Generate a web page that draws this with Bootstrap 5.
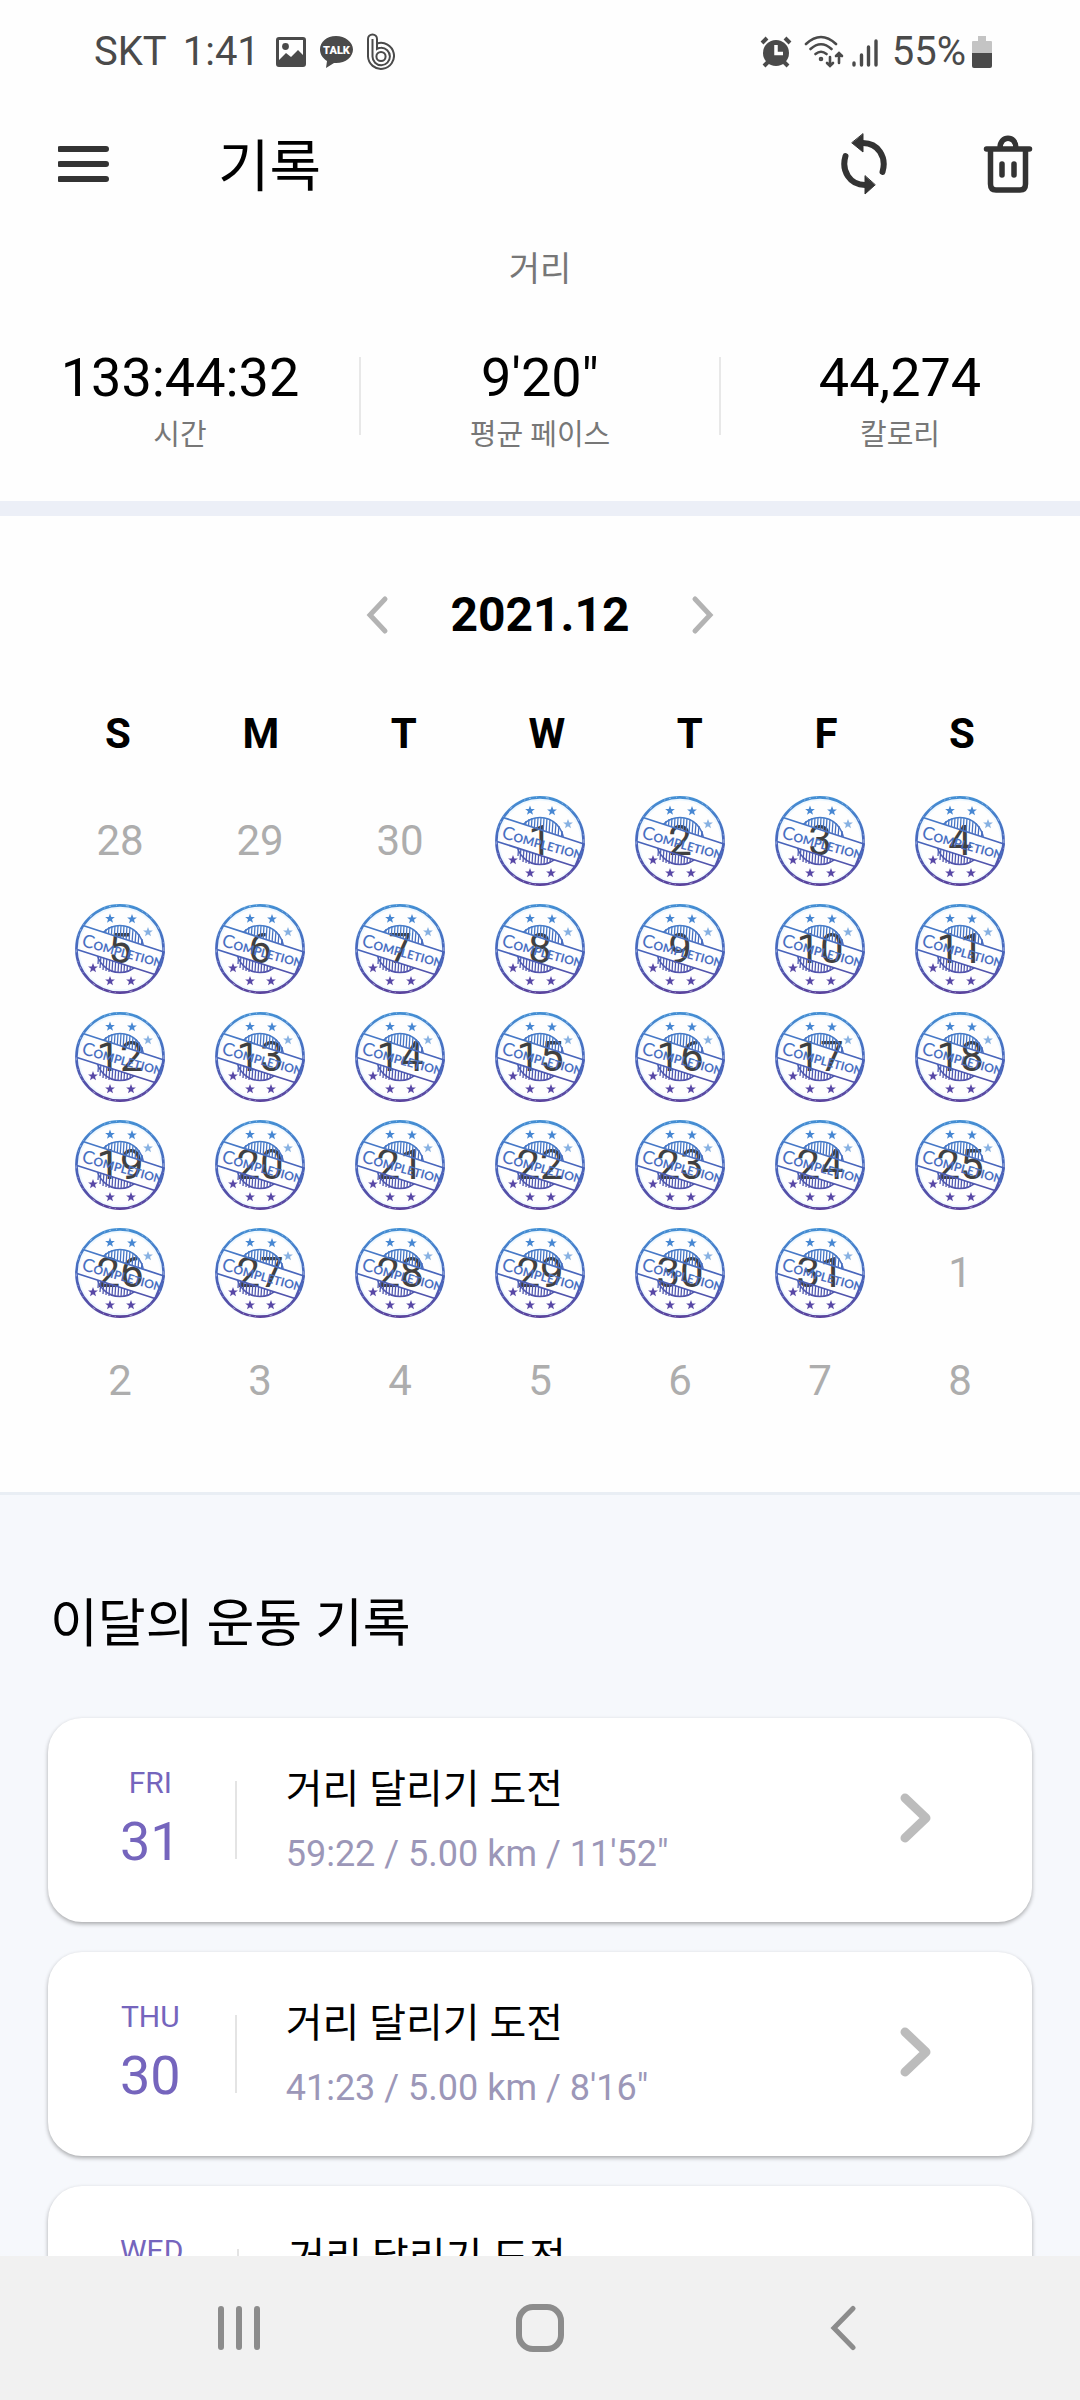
<!DOCTYPE html>
<html lang="ko">
<head>
<meta charset="utf-8">
<meta name="viewport" content="width=device-width, initial-scale=1">
<title>기록</title>
<link href="https://cdn.jsdelivr.net/npm/bootstrap@5.3.0/dist/css/bootstrap.min.css" rel="stylesheet">
<style>
  body { font-family: Roboto, "Noto Sans CJK KR", sans-serif; color: #000; background: #fefefe; line-height: 1; }
  svg { display: block; flex: none; }
  .btn { --bs-btn-padding-x: 0; --bs-btn-padding-y: 0; --bs-btn-border-width: 0; }

  .status-bar { height: 104px; padding: 0 88px 0 94px; font-size: 40px; color: #4a4a4a; }
  .app-bar { height: 120px; padding: 0 45px 0 58px; }
  .app-title { font-size: 56px; line-height: 72px; margin-left: 106px; padding-top: 6px; }

  .caption-lg { font-size: 34px; line-height: 48px; color: #777; margin-top: 21px; }
  .stats { padding: 53px 0 44px; border-bottom: 15px solid #eceff7; }
  .stat + .stat::before { content: ""; position: absolute; left: -1px; top: 11px; width: 2px; height: 78px; background: #e8e8e8; }
  .stat-value { font-size: 54px; line-height: 64px; }
  .stat-label { font-size: 29px; line-height: 44px; color: #777; padding-top: 3px; }

  .calendar { padding: 69px 50px 57px; border-bottom: 3px solid #e9eef4; }
  .month { gap: 61px; line-height: 60px; }
  .month-name { font-size: 48px; font-weight: 700; }
  .weekdays { font-size: 42px; line-height: 60px; padding: 0 54px; margin: 58px 0 22px; }
  .weekdays th { font-weight: 700; }
  .week td { flex: 1 0 0; height: 108px; font-size: 42px; color: #404040; }
  .week .out { color: #adadad; }
  .stamp { position: absolute; width: 90px; height: 90px; }

  .records { background: #f6f8fc; padding: 94px 48px 0; }
  .records h2 { font-size: 52px; font-weight: 400; line-height: 72px; margin: 0 0 57px 2px; }
  .record-list { gap: 30px; }
  .record { height: 204px; padding: 0 100px 0 72px; border-radius: 34px; background: #fff; color: #000;
            box-shadow: 0 2px 4px rgba(0, 0, 0, .32); }
  .record-day { color: #7565bd; }
  .record-dow { font-size: 30px; line-height: 44px; }
  .record-date { font-size: 54px; line-height: 74px; }
  .record-rule { width: 2px; height: 78px; background: #e4e4e4; margin: 0 49px 0 54px; }
  .record-title { font-size: 40px; line-height: 64px; }
  .record-data { font-size: 36px; line-height: 64px; color: #9c97b8; }

  .scroll-area { min-height: 0; scrollbar-width: none; }
  .scroll-area::-webkit-scrollbar { display: none; }
  .system-nav { height: 144px; padding: 0 88px; background: #f1f1f1; }
</style>
</head>
<body>
<svg width="0" height="0" class="position-absolute" aria-hidden="true">
  <defs>
    <linearGradient id="ink" gradientUnits="userSpaceOnUse" x1="0" y1="0" x2="0" y2="90">
      <stop offset="0" stop-color="#4490d4"/><stop offset=".5" stop-color="#4866bc"/><stop offset="1" stop-color="#5b429c"/>
    </linearGradient>
    <clipPath id="offBanner"><path d="M0 0H90V48L8 21L0 19ZM0 45L80 70V90H0Z"/></clipPath>
    <path id="star" d="M0-5L1.3-1.6L4.9-1.5L2 .8L3 4.2L0 2.2L-3 4.2L-2 .8L-4.9-1.5L-1.3-1.6Z"/>
    <symbol id="stamp" viewBox="0 0 90 90">
      <circle cx="45" cy="45" r="43" fill="none" stroke="#e3f4ff" stroke-width="5" opacity=".6"/>
      <g fill="none" stroke="url(#ink)">
        <circle cx="45" cy="45" r="43.6" stroke-width="2.6"/>
        <circle cx="45" cy="45" r="43.8" stroke="#fff" stroke-width="1" stroke-dasharray="2 5 1 9 3 14 1 4" opacity=".45"/>
        <path d="M8 21.5L89 48L80 70.5L2 45.5" stroke-width="1.8"/>
        <g clip-path="url(#offBanner)">
          <circle cx="45" cy="45" r="23.5" stroke-width="1.5"/>
          <path stroke-width="1.3" d="M25 31L23 60M28 27L25 64M31 25L28 66M34 23L31 67M37 22L34 68M40 22L37 68M43 22L40 68M46 22L43 69M49 22L46 69M52 22L49 68M55 23L52 68M58 25L55 67M61 27L58 65M64 30L61 62M67 35L65 58"/>
        </g>
      </g>
      <g fill="url(#ink)" transform="rotate(15 6 42)">
        <text x="6" y="42" font-family="Lato, sans-serif" font-size="18">C<tspan font-size="12" font-weight="700">OMPLETION</tspan></text>
      </g>
      <g fill="#4787d2">
        <use href="#star" x="35" y="14.500"/><use href="#star" x="57" y="15"/><use href="#star" x="73" y="28" opacity=".65"/>
      </g>
      <g fill="#5848a6">
        <use href="#star" x="18" y="64"/><use href="#star" x="35" y="77"/><use href="#star" x="56" y="77"/>
      </g>
    </symbol>
  </defs>
</svg>

<div class="vh-100 d-flex flex-column">
  <div class="status-bar flex-shrink-0 d-flex align-items-center justify-content-between">
    <div class="d-flex align-items-center">
      <span>SKT</span><span class="ms-3">1:41</span>
      <svg class="ms-3" width="30" height="30" viewBox="0 0 30 30" role="img" aria-label="사진">
        <path fill="#4a4a4a" fill-rule="evenodd" d="M3 0H27Q30 0 30 3V27Q30 30 27 30H3Q0 30 0 27V3Q0 0 3 0ZM3 3V23L10 16L15 20L22 13L27 18V3Z"/><circle cx="9.500" cy="9.500" r="3.400" fill="#4a4a4a"/>
      </svg>
      <svg style="margin-left:13px" width="34" height="34" viewBox="0 0 34 34" role="img" aria-label="톡">
        <path fill="#4a4a4a" d="M17 1C7.600 1 1 7 1 14.500C1 19.500 4 23.500 8 26L7 33L15 28C26 29 34 22 34 14.500C34 7 26 1 17 1Z"/>
        <text x="17.500" y="19" text-anchor="middle" font-family="Roboto" font-size="11" font-weight="900" fill="#fff">TALK</text>
      </svg>
      <svg style="margin-left:14px" width="28" height="38" viewBox="0 0 28 38" role="img" aria-label="b" fill="none" stroke="#4a4a4a" stroke-width="2">
        <path d="M1 6A4.500 4.500 0 0 1 10 6V10.500A13 13 0 1 1 1 23.500Z"/>
        <path d="M5.500 6V23.500A8.700 8.700 0 1 0 14 14.800Q12 14.800 10 16V11"/>
        <circle cx="14" cy="23.500" r="4.600"/>
      </svg>
    </div>
    <div class="d-flex align-items-center">
      <svg width="32" height="32" viewBox="0 0 32 32" role="img" aria-label="알람">
        <circle cx="16" cy="17" r="13" fill="#4a4a4a"/>
        <path d="M2 7L7 2M25 2L30 7M8 26L4 30M24 26L28 30" stroke="#4a4a4a" stroke-width="4" fill="none"/>
        <path d="M16 9V17.500H23" stroke="#fff" stroke-width="3.500" fill="none"/>
      </svg>
      <svg style="margin-left:12px" width="40" height="34" viewBox="0 0 40 34" role="img" aria-label="와이파이" fill="none" stroke="#4a4a4a" stroke-width="2.600" stroke-linecap="round">
        <path d="M2 9Q17-5 32 9M6.500 14Q17 4.500 27.500 14M11.500 19Q17 14.500 22.500 19"/>
        <circle cx="17" cy="24" r="1" /><path d="M26 22V30M23 28L26 31L29 28M35 28V19M32 21L35 18L38 21"/>
      </svg>
      <svg class="ms-2" width="26" height="32" viewBox="0 0 26 32" role="img" aria-label="신호" fill="none" stroke="#4a4a4a" stroke-width="3.400" stroke-linecap="round">
        <path d="M2 27V29M9.500 19V29M16.500 11V29M24 5V29"/>
      </svg>
      <span style="margin-left:14px">55%</span>
      <svg style="margin-left:6px" width="20" height="32" viewBox="0 0 20 32" role="img" aria-label="배터리">
        <path fill="#c4c4c4" d="M6 0H14V5H19Q20 5 20 6V17H0V6Q0 5 1 5H6Z"/><path fill="#4a4a4a" d="M0 17H20V30Q20 32 18 32H2Q0 32 0 30Z"/>
      </svg>
    </div>
  </div>

  <header class="app-bar flex-shrink-0 d-flex align-items-center">
    <button type="button" class="btn" aria-label="메뉴">
      <svg width="54" height="40" viewBox="0 0 54 40" stroke="#333" stroke-width="6" stroke-linecap="round"><path d="M2 5H48M2 20H48M2 35H48"/></svg>
    </button>
    <h1 class="app-title fw-normal mb-0">기록</h1>
    <button type="button" class="btn ms-auto" aria-label="동기화">
      <svg width="50" height="64" viewBox="0 0 50 64" fill="none" stroke="#333" stroke-width="6" stroke-linecap="round">
        <path d="M24 11C39 11 48 25 43.500 40M26 53C11 53 2 39 6.500 24"/>
        <path d="M24 2V20L13 11ZM26 44V62L36 53Z" fill="#333" stroke-width="1" stroke-linejoin="round"/>
      </svg>
    </button>
    <button type="button" class="btn" style="margin-left:92px" aria-label="삭제">
      <svg width="54" height="60" viewBox="0 0 54 60" fill="none" stroke="#333" stroke-width="5.500" stroke-linecap="round">
        <path d="M5.500 15H48.500M9.500 15V50Q9.500 56 15 56H39Q44.500 56 44.500 50V15M19 14C19 1 35 1 35 14M21 30V41M33 30V41"/>
      </svg>
    </button>
  </header>

  <main class="scroll-area flex-grow-1 overflow-auto">
    <p class="caption-lg text-center mb-0">거리</p>
    <section class="stats row g-0 text-center">
      <div class="stat col position-relative"><div class="stat-value">133:44:32</div><div class="stat-label">시간</div></div>
      <div class="stat col position-relative"><div class="stat-value">9'20"</div><div class="stat-label">평균 페이스</div></div>
      <div class="stat col position-relative"><div class="stat-value">44,274</div><div class="stat-label">칼로리</div></div>
    </section>

    <section class="calendar">
      <div class="month d-flex align-items-center justify-content-center">
        <button type="button" class="btn" aria-label="이전 달"><svg width="24" height="40" viewBox="0 0 24 40" fill="none" stroke="#b3b3b3" stroke-width="5" stroke-linecap="round"><path d="M20 4L5 20L20 36"/></svg></button>
        <span class="month-name">2021.12</span>
        <button type="button" class="btn" aria-label="다음 달"><svg width="24" height="40" viewBox="0 0 24 40" fill="none" stroke="#b3b3b3" stroke-width="5" stroke-linecap="round"><path d="M4 4L19 20L4 36"/></svg></button>
      </div>
      <table class="d-block">
        <thead class="d-block">
          <tr class="weekdays d-flex justify-content-between"><th>S</th><th>M</th><th>T</th><th>W</th><th>T</th><th>F</th><th>S</th></tr>
        </thead>
        <tbody class="d-block" id="weeks"></tbody>
      </table>
    </section>

    <section class="records">
      <h2>이달의 운동 기록</h2>
      <div class="record-list d-flex flex-column">
        <a href="#" class="record d-flex align-items-center text-decoration-none">
          <div class="record-day text-center"><div class="record-dow">FRI</div><div class="record-date">31</div></div>
          <div class="record-rule"></div>
          <div class="pt-1"><div class="record-title">거리 달리기 도전</div><div class="record-data">59:22 / 5.00 km / 11'52"</div></div>
          <svg class="ms-auto" width="34" height="54" viewBox="0 0 34 54" fill="none" stroke="#bcbcbc" stroke-width="9" stroke-linecap="round" stroke-linejoin="round"><path d="M7 5L28 25L7 45"/></svg>
        </a>
        <a href="#" class="record d-flex align-items-center text-decoration-none">
          <div class="record-day text-center"><div class="record-dow">THU</div><div class="record-date">30</div></div>
          <div class="record-rule"></div>
          <div class="pt-1"><div class="record-title">거리 달리기 도전</div><div class="record-data">41:23 / 5.00 km / 8'16"</div></div>
          <svg class="ms-auto" width="34" height="54" viewBox="0 0 34 54" fill="none" stroke="#bcbcbc" stroke-width="9" stroke-linecap="round" stroke-linejoin="round"><path d="M7 5L28 25L7 45"/></svg>
        </a>
        <a href="#" class="record d-flex align-items-center text-decoration-none">
          <div class="record-day text-center"><div class="record-dow">WED</div><div class="record-date">&nbsp;</div></div>
          <div class="record-rule"></div>
          <div class="pt-1"><div class="record-title">거리 달리기 도전</div><div class="record-data">&nbsp;</div></div>
        </a>
      </div>
    </section>
  </main>

  <nav class="system-nav flex-shrink-0 row g-0 align-items-center">
    <button type="button" class="btn col d-flex justify-content-center" aria-label="최근 앱"><svg width="44" height="46" viewBox="0 0 44 46" stroke="#8c8c8c" stroke-width="6" stroke-linecap="round"><path d="M4 4V42M22 4V42M40 4V42"/></svg></button>
    <button type="button" class="btn col d-flex justify-content-center" aria-label="홈"><svg width="48" height="48" viewBox="0 0 48 48"><rect x="3" y="3" width="42" height="42" rx="14" fill="none" stroke="#8c8c8c" stroke-width="6"/></svg></button>
    <button type="button" class="btn col d-flex justify-content-center" aria-label="뒤로"><svg width="30" height="46" viewBox="0 0 30 46" fill="none" stroke="#8c8c8c" stroke-width="5" stroke-linecap="round"><path d="M27 3.500L8 23L27 42.500"/></svg></button>
  </nav>
</div>

<script>
  // Six weeks from 28 November 2021; every day of December carries a stamp.
  const weeks = document.getElementById('weeks');
  for (let w = 0; w < 6; w++) {
    const row = weeks.insertRow();
    row.className = 'week d-flex';
    for (let d = 0; d < 7; d++) {
      const date = new Date(2021, 10, 28 + w * 7 + d);
      const done = date.getMonth() === 11;
      const cell = row.insertCell();
      cell.className = 'd-flex align-items-center justify-content-center position-relative' + (done ? '' : ' out');
      cell.innerHTML = '<span>' + date.getDate() + '</span>' + (done ? '<svg class="stamp" aria-hidden="true"><use href="#stamp"/></svg>' : '');
    }
  }
</script>
<script src="https://cdn.jsdelivr.net/npm/bootstrap@5.3.0/dist/js/bootstrap.bundle.min.js"></script>
</body>
</html>
